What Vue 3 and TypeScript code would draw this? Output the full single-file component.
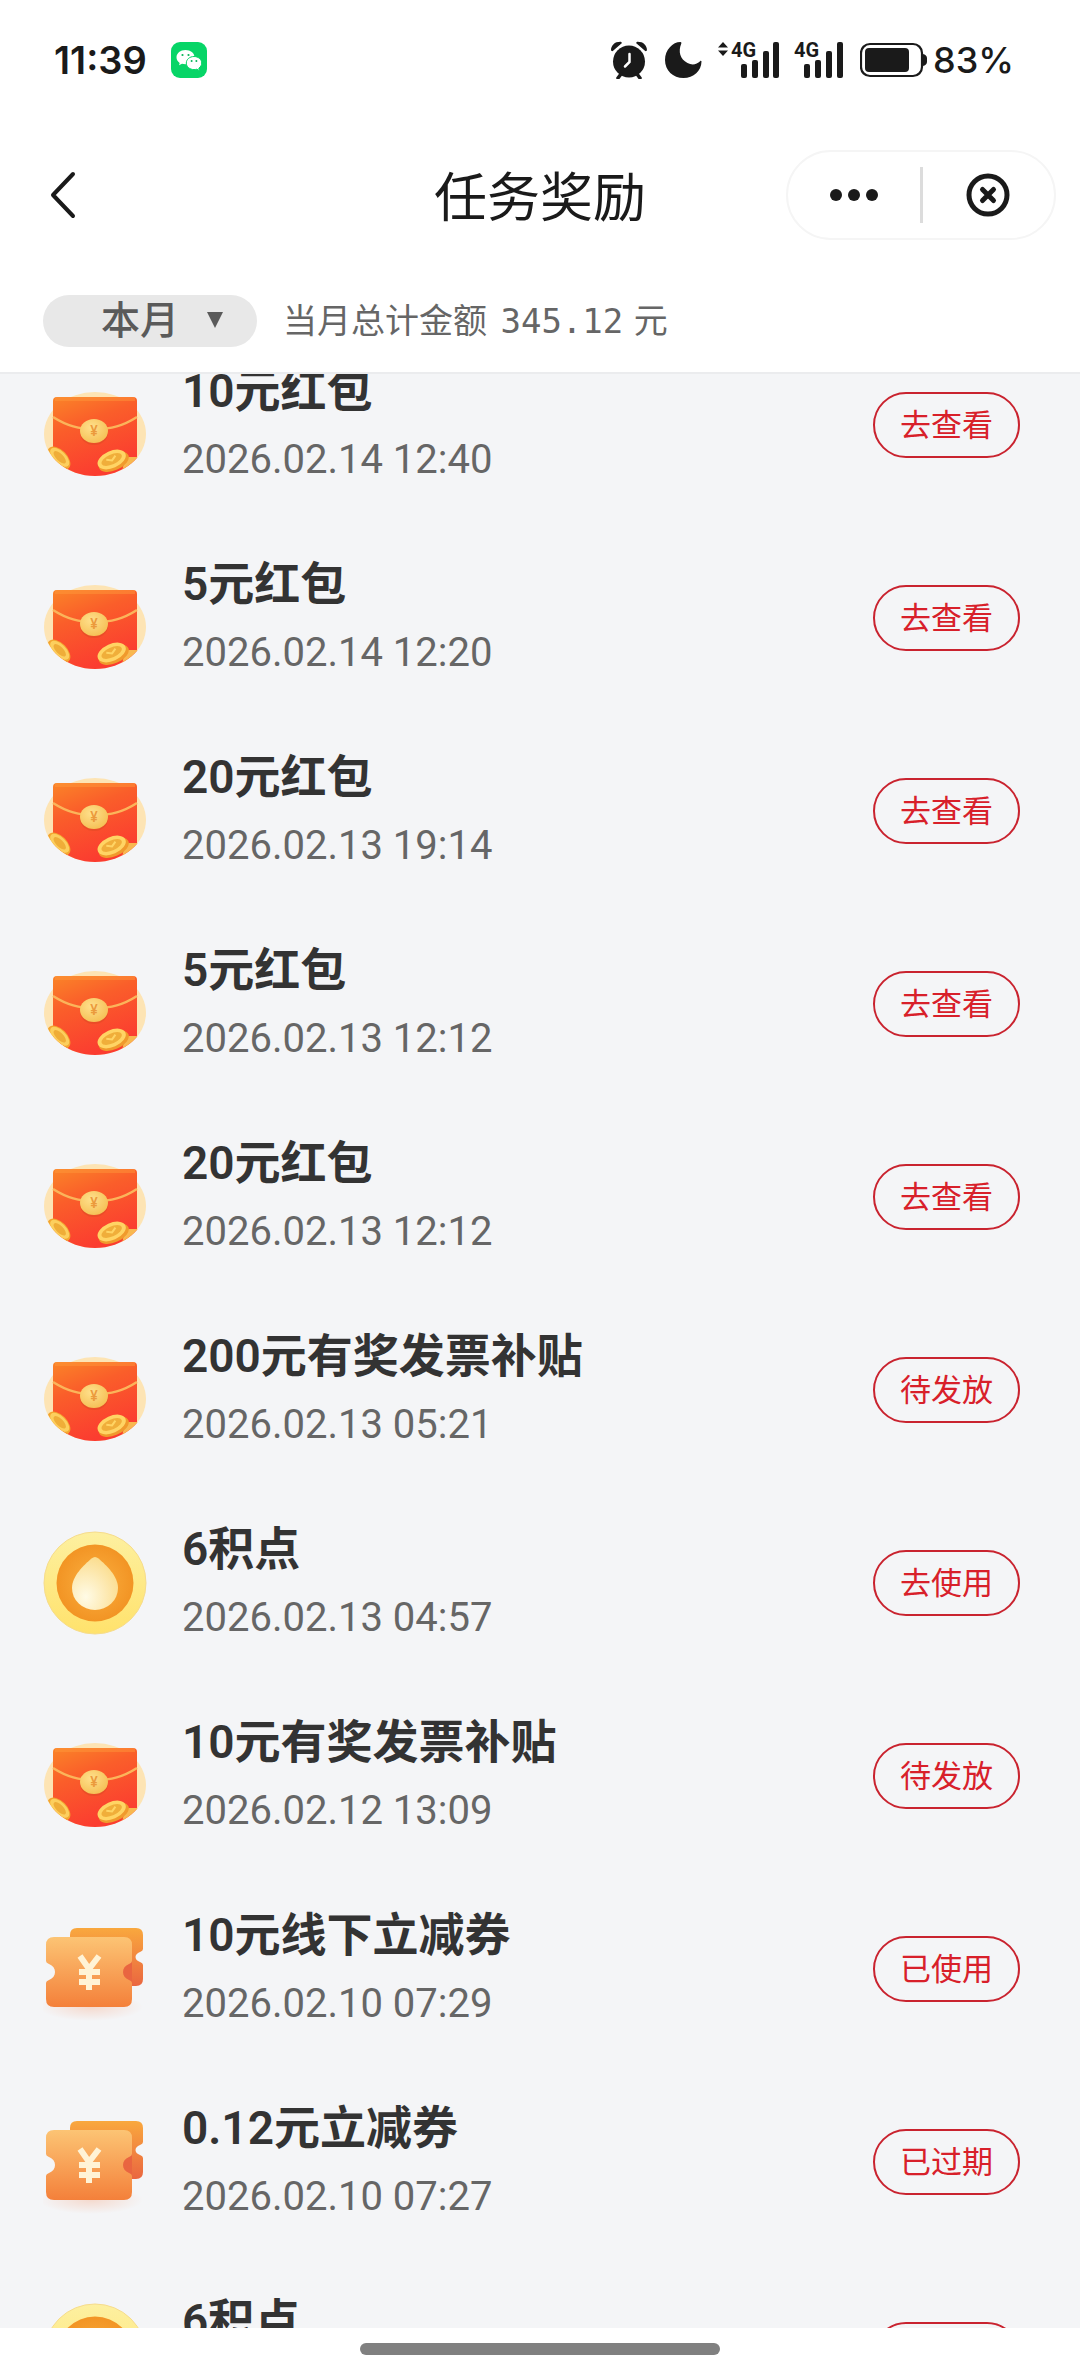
<script setup lang="ts">
import { ref } from 'vue'

type RewardKind = 'packet' | 'coin' | 'ticket'

interface Reward {
  title: string
  time: string
  action: string
  kind: RewardKind
}

const rewards: Reward[] = [
  { title: '10元红包', time: '2026.02.14 12:40', action: '去查看', kind: 'packet' },
  { title: '5元红包', time: '2026.02.14 12:20', action: '去查看', kind: 'packet' },
  { title: '20元红包', time: '2026.02.13 19:14', action: '去查看', kind: 'packet' },
  { title: '5元红包', time: '2026.02.13 12:12', action: '去查看', kind: 'packet' },
  { title: '20元红包', time: '2026.02.13 12:12', action: '去查看', kind: 'packet' },
  { title: '200元有奖发票补贴', time: '2026.02.13 05:21', action: '待发放', kind: 'packet' },
  { title: '6积点', time: '2026.02.13 04:57', action: '去使用', kind: 'coin' },
  { title: '10元有奖发票补贴', time: '2026.02.12 13:09', action: '待发放', kind: 'packet' },
  { title: '10元线下立减券', time: '2026.02.10 07:29', action: '已使用', kind: 'ticket' },
  { title: '0.12元立减券', time: '2026.02.10 07:27', action: '已过期', kind: 'ticket' },
  { title: '6积点', time: '', action: '', kind: 'coin' },
]

const month = ref('本月')
</script>

<template>
  <div class="page">
    <svg class="defs" width="0" height="0" aria-hidden="true">
      <defs>
        <linearGradient id="packetBody" x1="0" y1="0" x2="0.4" y2="1">
          <stop offset="0" stop-color="#fa8428" />
          <stop offset="0.4" stop-color="#fa5e2a" />
          <stop offset="1" stop-color="#fb3c30" />
        </linearGradient>
        <radialGradient id="gold" cx="0.4" cy="0.35" r="0.75">
          <stop offset="0" stop-color="#ffe08c" />
          <stop offset="1" stop-color="#f4bd50" />
        </radialGradient>
        <linearGradient id="coinRim" x1="0" y1="0" x2="0" y2="1">
          <stop offset="0" stop-color="#fdf0a0" />
          <stop offset="1" stop-color="#ffe26c" />
        </linearGradient>
        <radialGradient id="coinFace" cx="0.5" cy="0.5" r="0.5">
          <stop offset="0" stop-color="#fbb040" />
          <stop offset="1" stop-color="#f29424" />
        </radialGradient>
        <radialGradient id="drop" cx="0.3" cy="0.75" r="0.8">
          <stop offset="0" stop-color="#fffbe6" />
          <stop offset="1" stop-color="#fbdc8c" />
        </radialGradient>
        <linearGradient id="ticketFront" x1="0" y1="0" x2="0" y2="1">
          <stop offset="0" stop-color="#fcc474" />
          <stop offset="1" stop-color="#f4803a" />
        </linearGradient>
        <linearGradient id="ticketBack" x1="0" y1="0" x2="0" y2="1">
          <stop offset="0" stop-color="#f9a83e" />
          <stop offset="1" stop-color="#ea6640" />
        </linearGradient>
        <radialGradient id="ticketShade">
          <stop offset="0" stop-color="#f4b090" stop-opacity="0.4" />
          <stop offset="1" stop-color="#f4b090" stop-opacity="0" />
        </radialGradient>
        <clipPath id="packetClip">
          <path d="M0 0H104V60C103 84 80 103 52 103S2 84 0 60Z" />
        </clipPath>
      </defs>
    </svg>

    <header class="top">
      <div class="status">
        <div class="status-left">
          <span class="clock">11:39</span>
          <svg class="wechat" viewBox="0 0 36 36" aria-hidden="true">
            <rect width="36" height="36" rx="9" fill="#07d567" />
            <path fill="#fff" d="M14.500 8C9.500 8 5.500 11.200 5.500 15.300c0 2.300 1.200 4.300 3.200 5.600L8 23.200l3-1.500c1.100.3 2.200.5 3.500.5C19.500 22.200 23.500 19.100 23.500 15.100S19.500 8 14.500 8Z" />
            <path fill="#fff" stroke="#07d567" stroke-width="1" d="M23 14.500c-4.300 0-7.700 2.900-7.700 6.500s3.400 6.600 7.700 6.600c1 0 2-.2 2.800-.4l2.800 1.500-.8-2.500c1.800-1.200 2.900-3.100 2.900-5.200 0-3.600-3.400-6.500-7.700-6.500Z" />
            <g fill="#07b558">
              <circle cx="11.500" cy="13" r="1.100" /><circle cx="17.500" cy="13" r="1.100" />
              <circle cx="20.600" cy="19" r="1" /><circle cx="25.400" cy="19" r="1" />
            </g>
          </svg>
        </div>
        <div class="status-right">
          <svg class="alarm" viewBox="0 0 38 38" aria-hidden="true">
            <circle cx="19" cy="20.500" r="16" fill="#1a1a1a" />
            <path fill="#1a1a1a" d="M1 9.500C1 4 5 .500 11 .800L12 2 2.500 10.200ZM37 9.500C37 4 33 .500 27 .800L26 2 35.500 10.200Z" />
            <path d="M11 33 8 37M27 33l3 4" stroke="#1a1a1a" stroke-width="3.500" stroke-linecap="round" />
            <path d="M19.500 13v8l-4.500 4.500" fill="none" stroke="#fff" stroke-width="2.500" stroke-linecap="round" />
          </svg>
          <svg class="moon" viewBox="0 0 38 38" aria-hidden="true">
            <path fill="#1a1a1a" d="M16.500.900C9 .800 1 8.500 1 19c0 10.500 8 18 18.500 18C29.500 37 37.500 29.500 37.500 20.500c0-.9-.9-1-1.400-.3C33 23.500 28 24.500 23.500 22 16 18 14 10.500 17.300 2.500c.3-.8 0-1.500-.8-1.600Z" />
          </svg>
          <div class="signals">
            <svg width="62" height="54" viewBox="0 -8 62 54" aria-hidden="true">
              <path fill="#1a1a1a" d="M0 6.500 5 1l5 5.500ZM0 9.500h10L5 15Z" />
              <text x="13" y="16" class="net">4G</text>
              <g fill="#1a1a1a">
                <rect x="23" y="23" width="6" height="14" rx="2" /><rect x="34" y="19" width="6" height="18" rx="2" />
                <rect x="45" y="10" width="6" height="27" rx="2" /><rect x="55" y="1" width="6" height="36" rx="2" />
              </g>
            </svg>
            <svg width="50" height="54" viewBox="0 -8 50 54" aria-hidden="true">
              <text x="0" y="16" class="net">4G</text>
              <g fill="#1a1a1a">
                <rect x="10" y="23" width="6" height="14" rx="2" /><rect x="21" y="19" width="6" height="18" rx="2" />
                <rect x="32" y="10" width="6" height="27" rx="2" /><rect x="43" y="1" width="6" height="36" rx="2" />
              </g>
            </svg>
          </div>
          <svg width="68" height="36" viewBox="0 0 68 36" aria-hidden="true">
            <rect x="1" y="2" width="61" height="32" rx="9" fill="none" stroke="#1a1a1a" stroke-width="2.200" />
            <rect x="5" y="6" width="44" height="24" rx="4" fill="#1a1a1a" />
            <path fill="#1a1a1a" d="M62 12c3 0 5 2 5 4v4c0 2-2 4-5 4Z" />
          </svg>
          <span class="percent">83%</span>
        </div>
      </div>

      <nav class="nav">
        <button class="back" type="button" aria-label="返回">
          <svg width="28" height="48" viewBox="0 0 28 48" aria-hidden="true">
            <path d="M23 3 3 24 23 45" fill="none" stroke="#1a1a1a" stroke-width="4" stroke-linecap="round" stroke-linejoin="round" />
          </svg>
        </button>
        <h1>任务奖励</h1>
        <div class="capsule">
          <button type="button" aria-label="更多">
            <svg width="48" height="14" viewBox="0 0 48 14" fill="#1a1a1a" aria-hidden="true">
              <circle cx="6" cy="7" r="6" /><circle cx="24" cy="7" r="6" /><circle cx="42" cy="7" r="6" />
            </svg>
          </button>
          <i class="divider"></i>
          <button type="button" aria-label="关闭">
            <svg width="44" height="44" viewBox="0 0 44 44" fill="none" stroke="#1a1a1a" aria-hidden="true">
              <circle cx="22" cy="22" r="19" stroke-width="5" />
              <path d="M16.500 16.500 27.500 27.500M27.500 16.500 16.500 27.500" stroke-width="5" stroke-linecap="round" />
            </svg>
          </button>
        </div>
      </nav>

      <div class="filter">
        <label class="month">
          <select v-model="month" aria-label="月份">
            <option>本月</option>
            <option>上月</option>
          </select>
          <svg class="caret" viewBox="0 0 16 16" aria-hidden="true"><path fill="#5a5a5a" d="M0 0h16L8 16Z" /></svg>
        </label>
        <p class="total">当月总计金额 <span class="amount">345.12</span> 元</p>
      </div>
    </header>

    <main class="viewport">
      <ul class="list">
        <li v-for="(item, i) in rewards" :key="i" class="row">
          <svg v-if="item.kind === 'packet'" class="icon" viewBox="0 0 104 104" aria-hidden="true">
            <ellipse cx="52" cy="61" rx="51" ry="42" fill="#fde4b4" />
            <g clip-path="url(#packetClip)">
              <path fill="url(#packetBody)" d="M10 28q0-4 4-4H90q4 0 4 4V104H10Z" />
              <path d="M12 26H92" stroke="#ff9a3c" stroke-width="4" opacity="0.45" />
              <path d="M10 44C24 53 36 56 52 56S80 53 94 44" fill="none" stroke="#fbb45a" stroke-width="2.500" />
              <g transform="rotate(45 16 85)">
                <ellipse cx="16" cy="85" rx="14" ry="8" fill="#f3a630" />
                <ellipse cx="16" cy="84" rx="12" ry="6" fill="#fccf5e" />
                <ellipse cx="16" cy="84" rx="8" ry="3.500" fill="#efad38" />
              </g>
              <path d="M82 84H104V104H78Z" fill="#f8b850" />
              <g transform="rotate(-24 70 87)">
                <ellipse cx="70" cy="89" rx="16" ry="8.500" fill="#f09a2c" />
                <ellipse cx="69" cy="86" rx="15" ry="8.500" fill="#ffd464" />
                <ellipse cx="69" cy="86" rx="11" ry="5" fill="#f0ae3a" />
                <path d="M64 84 69 87 74 84" stroke="#ffd464" stroke-width="2" fill="none" />
              </g>
            </g>
            <ellipse cx="51" cy="60" rx="14" ry="12" fill="#c8441e" opacity="0.3" />
            <ellipse cx="51" cy="58" rx="14" ry="12" fill="url(#gold)" />
            <text x="51" y="63" class="yen-small">¥</text>
          </svg>

          <svg v-else-if="item.kind === 'coin'" class="icon" viewBox="0 0 104 104" aria-hidden="true">
            <circle cx="52" cy="52" r="51" fill="url(#coinRim)" stroke="#f6dc8c" stroke-width="1" />
            <circle cx="52" cy="52" r="38.500" fill="url(#coinFace)" />
            <path fill="url(#drop)" d="M48.500 27.500q3.500-3 7 0C63 34 75 45 75 57a23 22 0 0 1-46 0C29 45 41 34 48.500 27.500Z" />
          </svg>

          <svg v-else class="icon" viewBox="0 0 104 104" aria-hidden="true">
            <ellipse cx="48" cy="90" rx="52" ry="14" fill="url(#ticketShade)" />
            <path fill="url(#ticketBack)" d="M34 11H93q7 0 7 7V32q0 2-3 3c-6 2-6 8 0 10q3 1 3 3V62q0 7-7 7H34q-7 0-7-7V18q0-7 7-7Z" />
            <path fill="#e96540" d="M89 43C76 47 76 61 89 65Z" />
            <path fill="url(#ticketFront)" d="M11 20H81q8 0 8 8V44q0 2-3 3c-8 3-8 13 0 16q3 1 3 3V82q0 8-8 8H11q-8 0-8-8V66q0-2 3-3c8-3 8-13 0-16q-3-1-3-3V28q0-8 8-8Z" />
            <path d="M37 39 46 52 56 39M46 52V73M36 55H57M36 65H57" fill="none" stroke="#fff3d6" stroke-width="6" />
          </svg>

          <div class="info">
            <h2>{{ item.title }}</h2>
            <time>{{ item.time }}</time>
          </div>
          <button class="action" type="button" :aria-label="item.action || '查看详情'">{{ item.action }}</button>
        </li>
      </ul>
    </main>

    <footer class="home"><i class="home-bar"></i></footer>
  </div>
</template>

<style>
body {
  margin: 0;
  background: #fff;
}
</style>

<style scoped>
.page {
  display: flex;
  flex-direction: column;
  height: 100vh;
  overflow: hidden;
  background: #fff;
  color: #1a1a1a;
  font-family: Roboto, 'Noto Sans CJK SC', sans-serif;
}

.defs {
  position: absolute;
}

button {
  padding: 0;
  border: 0;
  background: none;
  color: inherit;
  font: inherit;
}

svg {
  display: block;
  flex: none;
}

.top {
  flex: none;
  border-bottom: 2px solid #ebecee;
}

.status {
  display: flex;
  align-items: center;
  justify-content: space-between;
  height: 120px;
  padding: 0 66px 0 54px;
  font-family: Inter, sans-serif;
}

.status-left,
.status-right,
.signals {
  display: flex;
  align-items: center;
}

.status-left {
  gap: 24px;
}

.clock {
  font-size: 38px;
  font-weight: 600;
  line-height: 48px;
}

.wechat {
  width: 36px;
  height: 36px;
}

.alarm,
.moon {
  width: 38px;
  height: 38px;
}

.alarm,
.moon,
.signals {
  margin-right: 16px;
}

.signals {
  gap: 14px;
}

.net {
  font-family: Roboto, sans-serif;
  font-size: 20px;
  font-weight: 700;
  fill: #1a1a1a;
}

.percent {
  margin-left: 5px;
  font-size: 36px;
  font-weight: 500;
  line-height: 48px;
}

.nav {
  display: grid;
  grid-template-columns: 1fr auto 1fr;
  align-items: center;
  height: 150px;
  padding: 0 24px;
}

.back {
  justify-self: start;
  margin-left: 26px;
}

h1 {
  margin: 0;
  padding-top: 8px;
  font-size: 53px;
  font-weight: 400;
  line-height: 64px;
}

.capsule {
  display: flex;
  align-items: center;
  justify-self: end;
  box-sizing: border-box;
  width: 270px;
  height: 90px;
  border: 2px solid #f5f5f5;
  border-radius: 45px;
}

.capsule button {
  display: flex;
  flex: 1;
  justify-content: center;
}

.divider {
  width: 3px;
  height: 56px;
  background: #dcdcdc;
}

.filter {
  display: flex;
  align-items: center;
  gap: 26px;
  height: 102px;
  padding: 0 43px;
  color: #666;
}

.month {
  position: relative;
}

.month select {
  display: block;
  box-sizing: border-box;
  width: 214px;
  height: 52px;
  padding: 0 0 8px 58px;
  border: 0;
  border-radius: 26px;
  background: #e8e8e8;
  color: #5a5a5a;
  font: 500 39px/44px 'Noto Sans CJK SC', sans-serif;
  appearance: none;
}

.caret {
  position: absolute;
  top: 17px;
  right: 34px;
  width: 16px;
  height: 16px;
  pointer-events: none;
}

.total {
  margin: 0;
  font-size: 34px;
  line-height: 52px;
}

.amount {
  padding: 0 2px 0 5px;
  font-family: 'DejaVu Sans Mono', monospace;
}

.viewport {
  flex: 1;
  min-height: 0;
  overflow: hidden;
  background: #f4f5f7;
}

/* The list is scrolled part of the way into its first row. */
.list {
  margin: -46px 0 0;
  padding: 0;
  list-style: none;
}

.row {
  display: flex;
  align-items: center;
  box-sizing: border-box;
  height: 193px;
  padding: 0 60px 0 43px;
}

.icon {
  width: 104px;
  height: 104px;
}

.yen-small {
  font-family: Roboto, sans-serif;
  font-size: 14px;
  font-weight: 500;
  text-anchor: middle;
  fill: #eb9a3c;
}

.info {
  flex: 1;
  margin-left: 35px;
}

h2 {
  margin: 0;
  color: #333;
  font-size: 46px;
  font-weight: 600;
  line-height: 70px;
}

time {
  display: block;
  min-height: 68px;
  color: #666;
  font-size: 40px;
  line-height: 68px;
}

.action {
  box-sizing: border-box;
  width: 147px;
  height: 66px;
  padding-top: 2px;
  border: 2px solid #c9232f;
  border-radius: 33px;
  color: #d8202a;
  font-size: 31px;
  line-height: 60px;
}

.home {
  display: flex;
  flex: none;
  justify-content: center;
  height: 33px;
  padding-top: 15px;
}

.home-bar {
  width: 360px;
  height: 12px;
  border-radius: 6px;
  background: #808080;
}
</style>
